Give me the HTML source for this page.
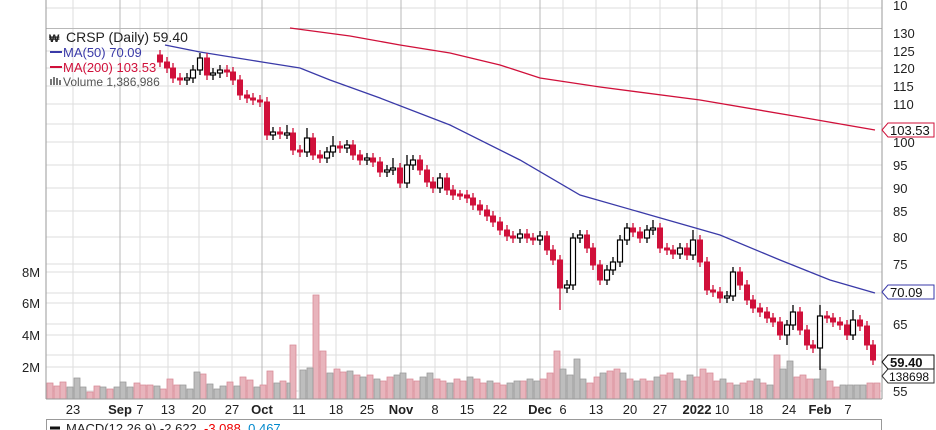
<!DOCTYPE html>
<html><head><meta charset="utf-8"><style>
html,body{margin:0;padding:0;background:#fff;width:936px;height:430px;overflow:hidden}
svg{display:block;font-family:"Liberation Sans",Arial,sans-serif}
.gl line{stroke:#dedede}
.r rect{fill:#d0103a;stroke:#d0103a}
.w rect{fill:#fff;stroke:#000;stroke-width:1.2}
</style></head><body>
<svg width="936" height="430" viewBox="0 0 936 430" xmlns="http://www.w3.org/2000/svg">
<g class="gl">
<line x1="46" y1="8" x2="882" y2="8"/><line x1="46" y1="51" x2="882" y2="51"/><line x1="46" y1="68" x2="882" y2="68"/><line x1="46" y1="86" x2="882" y2="86"/><line x1="46" y1="104" x2="882" y2="104"/><line x1="46" y1="124" x2="882" y2="124"/><line x1="46" y1="142" x2="882" y2="142"/><line x1="46" y1="165" x2="882" y2="165"/><line x1="46" y1="188" x2="882" y2="188"/><line x1="46" y1="211" x2="882" y2="211"/><line x1="46" y1="237" x2="882" y2="237"/><line x1="46" y1="264" x2="882" y2="264"/><line x1="46" y1="293" x2="882" y2="293"/><line x1="46" y1="324" x2="882" y2="324"/><line x1="46" y1="355" x2="882" y2="355"/><line x1="46" y1="391" x2="882" y2="391"/>
<line x1="46" y1="272" x2="882" y2="272"/><line x1="46" y1="303" x2="882" y2="303"/><line x1="46" y1="335" x2="882" y2="335"/><line x1="46" y1="367" x2="882" y2="367"/>
<line x1="73" y1="0" x2="73" y2="399"/><line x1="140" y1="0" x2="140" y2="399"/><line x1="168" y1="0" x2="168" y2="399"/><line x1="199" y1="0" x2="199" y2="399"/><line x1="232" y1="0" x2="232" y2="399"/><line x1="299" y1="0" x2="299" y2="399"/><line x1="336" y1="0" x2="336" y2="399"/><line x1="367" y1="0" x2="367" y2="399"/><line x1="435" y1="0" x2="435" y2="399"/><line x1="467" y1="0" x2="467" y2="399"/><line x1="500" y1="0" x2="500" y2="399"/><line x1="563" y1="0" x2="563" y2="399"/><line x1="596" y1="0" x2="596" y2="399"/><line x1="630" y1="0" x2="630" y2="399"/><line x1="660" y1="0" x2="660" y2="399"/><line x1="722" y1="0" x2="722" y2="399"/><line x1="756" y1="0" x2="756" y2="399"/><line x1="789" y1="0" x2="789" y2="399"/><line x1="848" y1="0" x2="848" y2="399"/>
</g>
<g stroke="#b8b8b8"><line x1="120" y1="0" x2="120" y2="399"/><line x1="262" y1="0" x2="262" y2="399"/><line x1="401" y1="0" x2="401" y2="399"/><line x1="540" y1="0" x2="540" y2="399"/><line x1="697" y1="0" x2="697" y2="399"/><line x1="820" y1="0" x2="820" y2="399"/><line x1="46" y1="28.5" x2="882" y2="28.5"/></g>

<!-- volume -->
<path fill="#e8b4bc" stroke="#d88a96" stroke-width="0.8" d="M47 399v-16h6v16zM54 399v-13h6v13zM60 399v-17h6v17zM87 399v-7h6v7zM94 399v-13h6v13zM107 399v-10h6v10zM134 399v-16h6v16zM140 399v-14h6v14zM147 399v-14h6v14zM160 399v-10h6v10zM167 399v-20h6v20zM174 399v-14h6v14zM200 399v-25h6v25zM227 399v-17h6v17zM240 399v-22h6v22zM247 399v-19h6v19zM260 399v-14h6v14zM267 399v-28h6v28zM280 399v-18h6v18zM290 399v-54h6v54zM313 399v-104h6v104zM320 399v-48h6v48zM334 399v-30h6v30zM340 399v-27h6v27zM354 399v-24h6v24zM367 399v-24h6v24zM380 399v-18h6v18zM387 399v-22h6v22zM407 399v-20h6v20zM414 399v-18h6v18zM434 399v-20h6v20zM440 399v-18h6v18zM454 399v-20h6v20zM460 399v-18h6v18zM474 399v-20h6v20zM480 399v-16h6v16zM494 399v-16h6v16zM500 399v-14h6v14zM520 399v-18h6v18zM540 399v-20h6v20zM547 399v-26h6v26zM554 399v-48h6v48zM587 399v-16h6v16zM594 399v-22h6v22zM607 399v-28h6v28zM614 399v-30h6v30zM627 399v-20h6v20zM640 399v-20h6v20zM647 399v-18h6v18zM660 399v-24h6v24zM667 399v-26h6v26zM680 399v-18h6v18zM694 399v-22h6v22zM700 399v-30h6v30zM707 399v-26h6v26zM714 399v-18h6v18zM727 399v-16h6v16zM740 399v-16h6v16zM747 399v-18h6v18zM760 399v-16h6v16zM774 399v-44h6v44zM794 399v-22h6v22zM800 399v-24h6v24zM807 399v-20h6v20zM827 399v-18h6v18zM834 399v-12h6v12zM867 399v-16h6v16zM874 399v-16h6v16z"/>
<path fill="#bdbdbd" stroke="#999" stroke-width="0.8" d="M67 399v-12h6v12zM74 399v-21h6v21zM80 399v-12h6v12zM100 399v-12h6v12zM114 399v-12h6v12zM120 399v-17h6v17zM127 399v-12h6v12zM154 399v-13h6v13zM180 399v-14h6v14zM187 399v-10h6v10zM194 399v-27h6v27zM207 399v-15h6v15zM214 399v-10h6v10zM220 399v-13h6v13zM234 399v-13h6v13zM254 399v-12h6v12zM274 399v-16h6v16zM287 399v-16h3v16zM300 399v-29h6v29zM307 399v-31h6v31zM327 399v-26h6v26zM347 399v-28h6v28zM360 399v-22h6v22zM374 399v-20h6v20zM394 399v-24h6v24zM400 399v-26h6v26zM420 399v-22h6v22zM427 399v-26h6v26zM447 399v-16h6v16zM467 399v-22h6v22zM487 399v-18h6v18zM507 399v-16h6v16zM514 399v-18h6v18zM527 399v-20h6v20zM534 399v-18h6v18zM560 399v-30h6v30zM567 399v-24h6v24zM574 399v-40h6v40zM580 399v-20h6v20zM600 399v-26h6v26zM620 399v-26h6v26zM634 399v-18h6v18zM654 399v-22h6v22zM674 399v-20h6v20zM687 399v-24h6v24zM720 399v-20h6v20zM734 399v-14h6v14zM754 399v-20h6v20zM767 399v-14h6v14zM780 399v-30h6v30zM787 399v-38h6v38zM814 399v-20h6v20zM820 399v-30h6v30zM840 399v-14h6v14zM847 399v-14h6v14zM854 399v-14h6v14zM860 399v-14h6v14z"/>

<!-- moving averages -->
<polyline fill="none" stroke="#3a3aa8" stroke-width="1.3" points="165,45 200,52 262,62 300,68 330,80 380,98 450,125 520,160 580,195 650,215 720,235 780,260 830,280 875,293"/>
<polyline fill="none" stroke="#d0103a" stroke-width="1.3" points="290,28 320,32 350,36 400,45 450,53 500,65 540,78 600,87 700,100 800,117 875,130"/>

<!-- red candles -->
<path fill="none" stroke="#d0103a" stroke-width="1.3" d="M160 50V67M167 57V73M173 63V83M180 73V85M207 53V80M227 65V77M233 67V85M240 75V100M247 90V103M253 93V105M260 95V107M267 97V140M280 127V139M293 128V155M300 145V157M313 133V160M320 150V163M340 141V153M353 140V160M360 150V165M373 153V167M380 157V177M400 163V188M420 155V175M427 165V187M433 177V193M447 173V195M453 185V200M460 190V200M467 190V203M473 193V210M480 200V215M487 205V221M493 211V227M500 217V235M507 225V241M513 231V243M527 229V243M533 233V245M547 231V255M553 245V265M560 255V310M587 230V253M593 243V270M600 260V285M633 223V237M640 227V243M660 223V253M667 243V255M673 245V259M687 243V260M700 235V267M707 257V295M713 285V297M720 287V303M740 267V290M747 280V305M753 295V313M760 303V317M767 307V323M773 313V327M780 317V340M800 307V335M807 325V350M813 340V353M827 311V323M833 313V327M840 317V330M847 320V340M860 315V331M867 321V350M873 340V365"/>
<g class="r">
<rect x="157.5" y="55" width="5" height="7"/><rect x="164.5" y="62" width="5" height="6"/><rect x="170.5" y="68" width="5" height="10"/><rect x="177.5" y="78" width="5" height="2"/><rect x="204.5" y="58" width="5" height="17"/><rect x="224.5" y="70" width="5" height="2"/><rect x="230.5" y="72" width="5" height="8"/><rect x="237.5" y="80" width="5" height="15"/><rect x="244.5" y="95" width="5" height="3"/><rect x="250.5" y="98" width="5" height="2"/><rect x="257.5" y="100" width="5" height="2"/><rect x="264.5" y="102" width="5" height="33"/><rect x="277.5" y="132" width="5" height="2"/><rect x="290.5" y="133" width="5" height="17"/><rect x="297.5" y="150" width="5" height="2"/><rect x="310.5" y="138" width="5" height="17"/><rect x="317.5" y="155" width="5" height="3"/><rect x="337.5" y="146" width="5" height="2"/><rect x="350.5" y="145" width="5" height="10"/><rect x="357.5" y="155" width="5" height="5"/><rect x="370.5" y="158" width="5" height="4"/><rect x="377.5" y="162" width="5" height="10"/><rect x="397.5" y="168" width="5" height="15"/><rect x="417.5" y="160" width="5" height="10"/><rect x="424.5" y="170" width="5" height="12"/><rect x="430.5" y="182" width="5" height="6"/><rect x="444.5" y="178" width="5" height="12"/><rect x="450.5" y="190" width="5" height="5"/><rect x="457.5" y="194" width="5" height="2"/><rect x="464.5" y="195" width="5" height="3"/><rect x="470.5" y="198" width="5" height="7"/><rect x="477.5" y="205" width="5" height="5"/><rect x="484.5" y="210" width="5" height="6"/><rect x="490.5" y="216" width="5" height="6"/><rect x="497.5" y="222" width="5" height="8"/><rect x="504.5" y="230" width="5" height="6"/><rect x="510.5" y="236" width="5" height="2"/><rect x="524.5" y="234" width="5" height="4"/><rect x="530.5" y="238" width="5" height="2"/><rect x="544.5" y="236" width="5" height="14"/><rect x="550.5" y="250" width="5" height="10"/><rect x="557.5" y="260" width="5" height="28"/><rect x="584.5" y="235" width="5" height="13"/><rect x="590.5" y="248" width="5" height="17"/><rect x="597.5" y="265" width="5" height="15"/><rect x="630.5" y="228" width="5" height="4"/><rect x="637.5" y="232" width="5" height="6"/><rect x="657.5" y="228" width="5" height="20"/><rect x="664.5" y="248" width="5" height="2"/><rect x="670.5" y="250" width="5" height="4"/><rect x="684.5" y="248" width="5" height="7"/><rect x="697.5" y="240" width="5" height="22"/><rect x="704.5" y="262" width="5" height="28"/><rect x="710.5" y="290" width="5" height="2"/><rect x="717.5" y="292" width="5" height="6"/><rect x="737.5" y="272" width="5" height="13"/><rect x="744.5" y="285" width="5" height="15"/><rect x="750.5" y="300" width="5" height="8"/><rect x="757.5" y="308" width="5" height="4"/><rect x="764.5" y="312" width="5" height="6"/><rect x="770.5" y="318" width="5" height="4"/><rect x="777.5" y="322" width="5" height="13"/><rect x="797.5" y="312" width="5" height="18"/><rect x="804.5" y="330" width="5" height="15"/><rect x="810.5" y="345" width="5" height="3"/><rect x="824.5" y="316" width="5" height="2"/><rect x="830.5" y="318" width="5" height="4"/><rect x="837.5" y="322" width="5" height="3"/><rect x="844.5" y="325" width="5" height="10"/><rect x="857.5" y="320" width="5" height="6"/><rect x="864.5" y="326" width="5" height="19"/><rect x="870.5" y="345" width="5" height="15"/>
</g>
<!-- white candles -->
<path fill="none" stroke="#000" stroke-width="1.3" d="M187 73V85M193 65V83M200 53V75M213 68V80M220 65V78M273 127V140M287 125V139M307 128V157M327 147V163M333 136V157M347 140V153M367 153V165M387 165V177M393 158V175M407 155V188M413 155V170M440 173V193M520 229V243M540 231V245M567 280V293M573 233V290M580 230V243M607 265V285M613 257V275M620 235V267M627 223V245M647 225V243M653 220V235M680 243V259M693 230V260M727 291V303M733 267V301M787 320V345M793 305V330M820 305V370M853 310V340"/>
<g class="w">
<rect x="184.5" y="78" width="5" height="2"/><rect x="190.5" y="70" width="5" height="8"/><rect x="197.5" y="58" width="5" height="12"/><rect x="210.5" y="73" width="5" height="2"/><rect x="217.5" y="70" width="5" height="3"/><rect x="270.5" y="132" width="5" height="3"/><rect x="284.5" y="133" width="5" height="2"/><rect x="304.5" y="138" width="5" height="14"/><rect x="324.5" y="152" width="5" height="6"/><rect x="330.5" y="146" width="5" height="6"/><rect x="344.5" y="145" width="5" height="3"/><rect x="364.5" y="158" width="5" height="2"/><rect x="384.5" y="170" width="5" height="2"/><rect x="390.5" y="168" width="5" height="2"/><rect x="404.5" y="165" width="5" height="18"/><rect x="410.5" y="160" width="5" height="5"/><rect x="437.5" y="178" width="5" height="10"/><rect x="517.5" y="234" width="5" height="4"/><rect x="537.5" y="236" width="5" height="4"/><rect x="564.5" y="285" width="5" height="3"/><rect x="570.5" y="238" width="5" height="47"/><rect x="577.5" y="235" width="5" height="3"/><rect x="604.5" y="270" width="5" height="10"/><rect x="610.5" y="262" width="5" height="8"/><rect x="617.5" y="240" width="5" height="22"/><rect x="624.5" y="228" width="5" height="12"/><rect x="644.5" y="230" width="5" height="8"/><rect x="650.5" y="228" width="5" height="2"/><rect x="677.5" y="248" width="5" height="6"/><rect x="690.5" y="240" width="5" height="15"/><rect x="724.5" y="296" width="5" height="2"/><rect x="730.5" y="272" width="5" height="24"/><rect x="784.5" y="325" width="5" height="10"/><rect x="790.5" y="312" width="5" height="13"/><rect x="817.5" y="316" width="5" height="32"/><rect x="850.5" y="320" width="5" height="15"/>
</g>

<!-- axes -->
<line x1="46" y1="0" x2="46" y2="399" stroke="#999"/><line x1="46" y1="399" x2="882" y2="399" stroke="#999"/><line x1="882" y1="0" x2="882" y2="399" stroke="#999"/>

<g font-size="13" fill="#222">
<text x="893" y="10">10</text><text x="893" y="38">130</text><text x="893" y="56">125</text><text x="893" y="73">120</text><text x="893" y="91">115</text><text x="893" y="109">110</text><text x="893" y="147">100</text><text x="893" y="170">95</text><text x="893" y="193">90</text><text x="893" y="216">85</text><text x="893" y="242">80</text><text x="893" y="269">75</text><text x="893" y="329">65</text><text x="893" y="396">55</text>
<text x="22" y="277">8M</text><text x="22" y="308">6M</text><text x="22" y="340">4M</text><text x="22" y="372">2M</text>
</g>
<g font-size="13" fill="#222" text-anchor="middle">
<text x="73" y="414">23</text><text x="140" y="414">7</text><text x="168" y="414">13</text><text x="199" y="414">20</text><text x="232" y="414">27</text><text x="299" y="414">11</text><text x="336" y="414">18</text><text x="367" y="414">25</text><text x="435" y="414">8</text><text x="467" y="414">15</text><text x="500" y="414">22</text><text x="563" y="414">6</text><text x="596" y="414">13</text><text x="630" y="414">20</text><text x="660" y="414">27</text><text x="722" y="414">10</text><text x="756" y="414">18</text><text x="789" y="414">24</text><text x="848" y="414">7</text>
<g font-weight="bold"><text x="120" y="414">Sep</text><text x="262" y="414">Oct</text><text x="401" y="414">Nov</text><text x="540" y="414">Dec</text><text x="697" y="414">2022</text><text x="820" y="414">Feb</text></g>
</g>

<!-- right tags -->
<path d="M882 130L888 123H934V137H888Z" fill="#fff" stroke="#d0103a"/><text x="890" y="135" font-size="13" fill="#111">103.53</text>
<path d="M882 292L888 285H934V299H888Z" fill="#fff" stroke="#3a3aa8"/><text x="890" y="297" font-size="13" fill="#111">70.09</text>
<path d="M882 376L888 369H934V383H888Z" fill="#fff" stroke="#333"/><text x="889" y="381" font-size="12" fill="#111">138698</text>
<path d="M882 362L888 355H934V369H888Z" fill="#fff" stroke="#111"/><text x="890" y="367" font-size="13" font-weight="bold" fill="#111">59.40</text>

<!-- legend -->
<text x="49" y="42" font-size="11" font-weight="bold" fill="#222">₩</text>
<text x="66" y="42" font-size="14" fill="#222">CRSP (Daily) 59.40</text>
<line x1="50" y1="52" x2="62" y2="52" stroke="#3a3aa8" stroke-width="2"/><text x="63" y="57" font-size="13" fill="#3a3aa8">MA(50) 70.09</text>
<line x1="50" y1="67" x2="62" y2="67" stroke="#d0103a" stroke-width="2"/><text x="63" y="72" font-size="13" fill="#d0103a">MA(200) 103.53</text>
<rect x="50" y="79" width="2" height="6" fill="#777"/><rect x="53" y="77" width="2" height="8" fill="#777"/><rect x="56" y="78" width="2" height="7" fill="#777"/><rect x="59" y="80" width="2" height="5" fill="#777"/>
<text x="63" y="86" font-size="12" fill="#555">Volume 1,386,986</text>

<!-- MACD panel -->
<rect x="46.5" y="419.5" width="835" height="20" fill="#fff" stroke="#999"/>
<line x1="50" y1="428" x2="60" y2="428" stroke="#111" stroke-width="3"/>
<text x="66" y="433" font-size="13" fill="#222">MACD(12,26,9) -2.622, <tspan fill="#e00">-3.088</tspan>, <tspan fill="#08c">0.467</tspan></text>
</svg>
</body></html>
